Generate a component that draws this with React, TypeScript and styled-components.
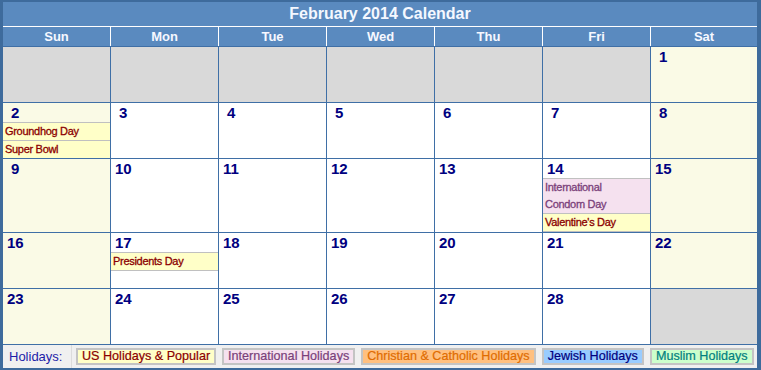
import React from "react";
import styled, { createGlobalStyle } from "styled-components";

const GlobalStyle = createGlobalStyle`
  html, body { margin: 0; padding: 0; background: #ffffff; }
  body { font-family: "Liberation Sans", Arial, sans-serif; }
`;

type EventKind = "us" | "intl";
type Ev = { kind: EventKind; lines: string[] };
type Cell = { day?: number; events?: Ev[] };

const GRID = "#3f6fa6";
const HEAD = "#5a8abf";

const Frame = styled.div`
  width: 761px;
  height: 370px;
  box-sizing: border-box;
  border-style: solid;
  border-color: #3e6b9c;
  border-width: 2px 4px 2px 3px;
  display: flex;
  flex-direction: column;
  background: #f0f0f0;
`;

const TitleBar = styled.div`
  height: 24px;
  background: ${HEAD};
  color: #f4f8ff;
  font-weight: bold;
  font-size: 16px;
  display: flex;
  align-items: center;
  justify-content: center;
  border-bottom: 1px solid #ffffff;
`;

const HeaderRow = styled.div`
  display: grid;
  grid-template-columns: repeat(6, 107px) 1fr;
  column-gap: 1px;
  background: #ffffff;
  height: 19px;
  border-bottom: 1px solid ${GRID};
`;

const HeaderCell = styled.div`
  background: ${HEAD};
  color: #f6f8ff;
  font-weight: bold;
  font-size: 13px;
  display: flex;
  align-items: center;
  justify-content: center;
`;

const Grid = styled.div`
  display: grid;
  grid-template-columns: repeat(6, 107px) 1fr;
  grid-template-rows: 55px 55px 73px 55px 55px;
  gap: 1px;
  background: ${GRID};
  border-bottom: 1px solid ${GRID};
`;

const DayCell = styled.div<{ $variant: "empty" | "weekend" | "weekday" }>`
  overflow: hidden;
  display: flex;
  flex-direction: column;
  background: ${(p) =>
    p.$variant === "empty" ? "#d9d9d9" : p.$variant === "weekend" ? "#fafae6" : "#ffffff"};
`;

const DayNum = styled.div<{ $single: boolean }>`
  height: 19px;
  line-height: 19px;
  font-size: 15px;
  font-weight: bold;
  color: #000080;
  padding-left: ${(p) => (p.$single ? "8px" : "4px")};
`;

const EventList = styled.div`
  border-top: 1px solid #c0c0c0;
`;

const EventItem = styled.div<{ $kind: EventKind }>`
  background: ${(p) => (p.$kind === "us" ? "#ffffc8" : "#f5e1ef")};
  color: ${(p) => (p.$kind === "us" ? "#8b0000" : "#7a3f7a")};
  font-size: 11px;
  letter-spacing: -0.3px;
  line-height: 17px;
  padding: 0 2px;
  border-bottom: 1px solid #c0c0c0;
  -webkit-text-stroke: 0.3px currentColor;
`;

const EventLine = styled.div`
  white-space: nowrap;
`;

const Legend = styled.div`
  flex: 1;
  display: flex;
  align-items: center;
  background: #f0f0f0;
  padding-left: 6px;
`;

const LegendLabel = styled.div`
  color: #1c1ca8;
  font-size: 13px;
  width: 62px;
  align-self: stretch;
  display: flex;
  align-items: center;
  border-right: 1px solid #dcdcdc;
`;

const LegendItems = styled.div`
  display: flex;
  gap: 6px;
  margin-left: 4px;
`;

const LegendItem = styled.div<{ $bg: string; $fg: string }>`
  height: 17px;
  box-sizing: border-box;
  border: 2px solid #c4c4c4;
  background: ${(p) => p.$bg};
  color: ${(p) => p.$fg};
  font-size: 12.6px;
  line-height: 13px;
  padding: 0 4px;
  display: flex;
  align-items: center;
  white-space: nowrap;
  -webkit-text-stroke: 0.2px currentColor;
`;

const days = ["Sun", "Mon", "Tue", "Wed", "Thu", "Fri", "Sat"];

const weeks: Cell[][] = [
  [{}, {}, {}, {}, {}, {}, { day: 1 }],
  [
    {
      day: 2,
      events: [
        { kind: "us", lines: ["Groundhog Day"] },
        { kind: "us", lines: ["Super Bowl"] },
      ],
    },
    { day: 3 },
    { day: 4 },
    { day: 5 },
    { day: 6 },
    { day: 7 },
    { day: 8 },
  ],
  [
    { day: 9 },
    { day: 10 },
    { day: 11 },
    { day: 12 },
    { day: 13 },
    {
      day: 14,
      events: [
        { kind: "intl", lines: ["International", "Condom Day"] },
        { kind: "us", lines: ["Valentine's Day"] },
      ],
    },
    { day: 15 },
  ],
  [
    { day: 16 },
    { day: 17, events: [{ kind: "us", lines: ["Presidents Day"] }] },
    { day: 18 },
    { day: 19 },
    { day: 20 },
    { day: 21 },
    { day: 22 },
  ],
  [{ day: 23 }, { day: 24 }, { day: 25 }, { day: 26 }, { day: 27 }, { day: 28 }, {}],
];

const legend = [
  { label: "US Holidays & Popular", bg: "#ffffc8", fg: "#8b0000" },
  { label: "International Holidays", bg: "#f5e1ef", fg: "#7a3f7a" },
  { label: "Christian & Catholic Holidays", bg: "#ffc080", fg: "#e06c00" },
  { label: "Jewish Holidays", bg: "#99ccff", fg: "#000080" },
  { label: "Muslim Holidays", bg: "#ccffcc", fg: "#008080" },
];

export default function App() {
  return (
    <>
      <GlobalStyle />
      <Frame>
        <TitleBar>February 2014 Calendar</TitleBar>
        <HeaderRow>
          {days.map((d) => (
            <HeaderCell key={d}>{d}</HeaderCell>
          ))}
        </HeaderRow>
        <Grid>
          {weeks.map((week, wi) =>
            week.map((cell, ci) => {
              const variant =
                cell.day === undefined ? "empty" : ci === 0 || ci === 6 ? "weekend" : "weekday";
              return (
                <DayCell key={`${wi}-${ci}`} $variant={variant}>
                  {cell.day !== undefined && (
                    <DayNum $single={cell.day < 10}>{cell.day}</DayNum>
                  )}
                  {cell.events && (
                    <EventList>
                      {cell.events.map((e) => (
                        <EventItem key={e.lines.join(" ")} $kind={e.kind}>
                          {e.lines.map((line) => (
                            <EventLine key={line}>{line}</EventLine>
                          ))}
                        </EventItem>
                      ))}
                    </EventList>
                  )}
                </DayCell>
              );
            })
          )}
        </Grid>
        <Legend>
          <LegendLabel>Holidays:</LegendLabel>
          <LegendItems>
            {legend.map((l) => (
              <LegendItem key={l.label} $bg={l.bg} $fg={l.fg}>
                {l.label}
              </LegendItem>
            ))}
          </LegendItems>
        </Legend>
      </Frame>
    </>
  );
}
